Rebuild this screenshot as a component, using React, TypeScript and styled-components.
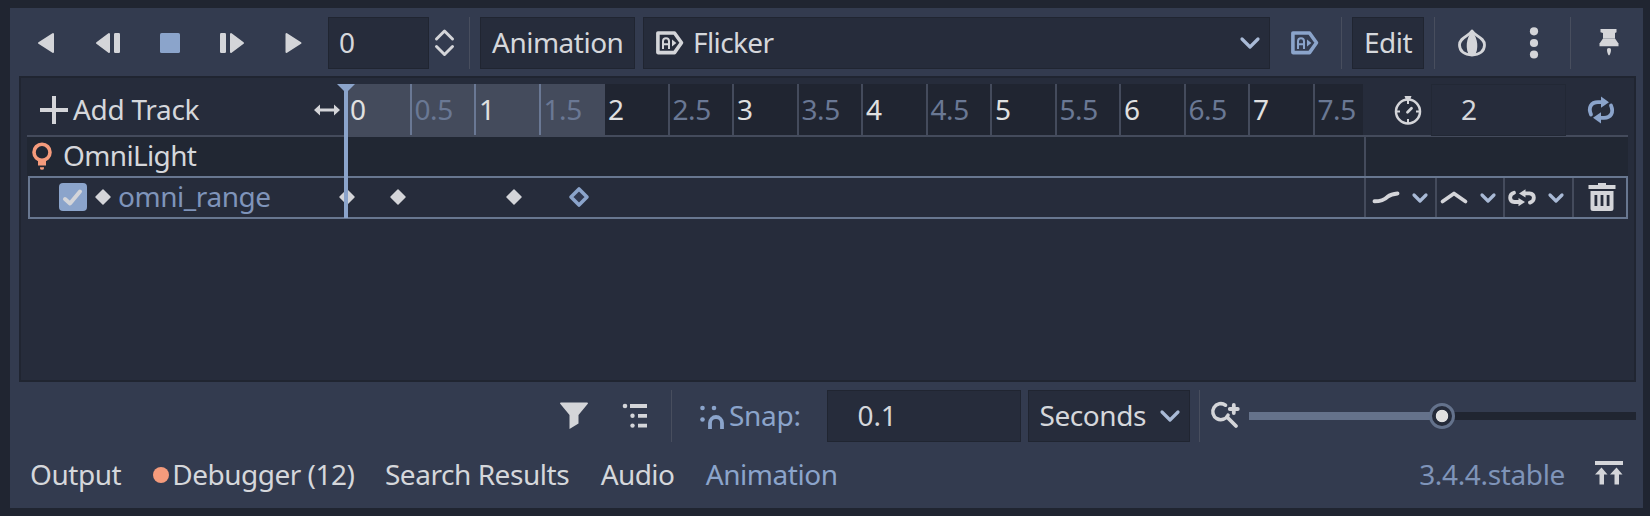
import React from "react";
import styled, { createGlobalStyle } from "styled-components";

const c = {
  base: "#202531",
  panel: "#333b4f",
  field: "#262c3b",
  line: "#444b5c",
  text: "#d5d7db",
  light: "#e0e0e0",
  icon: "#d4d5d9",
  accent: "#8ba4cb",
  dim: "#6a7894",
  select: "#687790",
  warn: "#f59b7c",
};

const GlobalStyle = createGlobalStyle`
  * { box-sizing: border-box; }
  body {
    margin: 0;
    background: ${c.base};
    color: ${c.text};
    font: 28px/38px "Noto Sans", sans-serif;
    white-space: nowrap;
    overflow: hidden;
  }
  svg { display: block; flex: none; overflow: visible; }
`;

const Page = styled.div`
  height: 516px;
  width: 1650px;
  padding: 8px 7px 8px 10px;
`;

const Dock = styled.main`
  height: 500px;
  background: ${c.panel};
  display: flex;
  flex-direction: column;
  padding: 9px 7px 0 9px;
`;

const Toolbar = styled.div`
  display: flex;
  align-items: center;
  height: 52px;
`;

const Transport = styled.div`
  display: flex;
  gap: 34px;
  padding: 0 20px 0 13px;
`;

const Slot = styled.div<{ $ml?: number; $mt?: number }>`
  margin-left: ${(p) => p.$ml ?? 0}px;
  margin-top: ${(p) => p.$mt ?? 0}px;
  flex: none;
`;

const Box = styled.div<{ $w: number; $pl: number; $ml?: number }>`
  width: ${(p) => p.$w}px;
  padding-left: ${(p) => p.$pl}px;
  margin-left: ${(p) => p.$ml ?? 0}px;
  height: 52px;
  flex: none;
  display: flex;
  align-items: center;
  background: ${c.field};
  border: 1px solid ${c.base};
`;

const Sep = styled.div<{ $ml: number }>`
  width: 1px;
  height: 52px;
  flex: none;
  margin-left: ${(p) => p.$ml}px;
  background: #484e5e;
`;

const Label = styled.span<{ $ls?: number; $ml?: number; $color?: string; $up?: number }>`
  letter-spacing: ${(p) => p.$ls ?? -0.45}px;
  margin-left: ${(p) => p.$ml ?? 0}px;
  margin-bottom: ${(p) => (p.$up ?? 1) * 2}px;
  color: ${(p) => p.$color ?? "inherit"};
`;

const Editor = styled.section`
  height: 306px;
  margin-top: 7px;
  background: ${c.field};
  border: 2px solid ${c.base};
  padding: 6px;
`;

const Tracks = styled.div`
  position: relative;
  width: 1601px;
`;

const Header = styled.div`
  display: flex;
  height: 53px;
  border-bottom: 2px solid ${c.line};
`;

const AddTrack = styled.div`
  width: 318px;
  flex: none;
  display: flex;
  align-items: center;
  padding-left: 13px;
`;

const Ruler = styled.div`
  width: 1018px;
  flex: none;
  display: flex;
  background: ${c.base};
  overflow: hidden;
`;

const Tick = styled.div<{ $major: boolean; $inside: boolean; $color: string }>`
  width: 64.5px;
  flex: none;
  display: flex;
  align-items: center;
  padding: 0 0 1px 3px;
  letter-spacing: -0.4px;
  border-left: 2px solid ${(p) => p.$color};
  background: ${(p) => (p.$inside ? c.line : "transparent")};
  color: ${(p) => (p.$major ? c.light : c.dim)};
`;

const LengthTools = styled.div`
  flex: 1;
  display: flex;
  align-items: center;
  padding-left: 31px;
`;

const LengthField = styled.div`
  width: 135px;
  height: 52px;
  margin: 1px 21px 0 9px;
  padding: 5px 0 0 29px;
  border: 1px solid #222835;
  background: ${c.field};
`;

const NodeRow = styled.div`
  height: 39px;
  display: flex;
  align-items: center;
  padding-left: 1px;
  background: #212733;
`;

const NodeEnd = styled.div`
  width: 264px;
  height: 39px;
  margin-left: auto;
  border-left: 2px solid ${c.line};
`;

const PropertyRow = styled.div`
  height: 43px;
  margin-left: 1px;
  display: flex;
  border: 2px solid ${c.select};
`;

const PropertyName = styled.div`
  width: 316px;
  display: flex;
  align-items: center;
  padding-left: 29px;
`;

const Check = styled.div`
  width: 28px;
  height: 28px;
  margin: 0 8px 1px 0;
  border-radius: 4px;
  background: ${c.accent};
`;

const KeyLane = styled.div`
  position: relative;
  flex: 1;
`;

const Key = styled.div<{ $x: number }>`
  position: absolute;
  left: ${(p) => p.$x - 14}px;
  top: 4.7px;
`;

const Cell = styled.div<{ $w: number; $pl: number; $gap?: number }>`
  width: ${(p) => p.$w}px;
  flex: none;
  display: flex;
  align-items: center;
  gap: ${(p) => p.$gap ?? 0}px;
  padding-left: ${(p) => p.$pl}px;
  border-left: 2px solid ${c.line};
`;

const Playhead = styled.div`
  position: absolute;
  left: 317px;
  top: 0;
  width: 4px;
  height: 134px;
  background: ${c.accent};
  &::before {
    content: "";
    position: absolute;
    left: -7px;
    top: 0;
    border: 9px solid transparent;
    border-top-color: ${c.accent};
    border-bottom: 0;
  }
`;

const Options = styled.div`
  display: flex;
  align-items: center;
  height: 52px;
  margin-top: 8px;
  padding-left: 541px;
`;

const Slider = styled.div`
  position: relative;
  flex: 1;
  height: 8px;
  margin-left: 9px;
  background: linear-gradient(90deg, #65728b 187px, ${c.base} 187px);
`;

const Thumb = styled.div`
  position: absolute;
  left: 180px;
  top: -9px;
  width: 26px;
  height: 26px;
  border-radius: 50%;
  border: 3px solid #64728c;
  background: radial-gradient(circle, ${c.light} 5.8px, #252b3a 6.6px);
`;

const Tabs = styled.div`
  display: flex;
  align-items: center;
  height: 64px;
  padding-left: 11px;
`;

const Dot = styled.i`
  width: 16px;
  height: 16px;
  margin: 1px 3px 0 32px;
  border-radius: 50%;
  background: ${c.warn};
`;

const Version = styled.span`
  margin-left: auto;
  margin-right: 30px;
  letter-spacing: -0.35px;
  color: #7f94b9;
`;

const EndSlot = styled.div`
  margin-right: 13px;
`;

type IconProps = { children: React.ReactNode; color?: string };
const Icon = ({ children, color = c.icon }: IconProps) => (
  <svg width="28" height="28" viewBox="0 0 28 28" fill={color} stroke={color} strokeWidth="0">
    {children}
  </svg>
);

const Line = ({ d, w = 3.4 }: { d: string; w?: number }) => (
  <path d={d} fill="none" strokeWidth={w} strokeLinecap="round" strokeLinejoin="round" />
);

const PlayShape = ({ x }: { x: number }) => (
  <path d={`M${x + 1} 5v18l14-9z`} strokeWidth="2" strokeLinejoin="round" />
);

const Play = () => <Icon><PlayShape x={5.5} /></Icon>;
const PlayBack = () => <Icon><g transform="matrix(-1 0 0 1 28 0)"><PlayShape x={6} /></g></Icon>;
const StepShape = () => (
  <>
    <rect x="2" y="4" width="6" height="20" rx="1.2" />
    <path d="M13 5v18l12-9z" strokeWidth="2" strokeLinejoin="round" />
  </>
);
const Step = () => <Icon><StepShape /></Icon>;
const StepBack = () => <Icon><g transform="matrix(-1 0 0 1 28 0)"><StepShape /></g></Icon>;
const Stop = () => <Icon color={c.accent}><rect x="4" y="4" width="20" height="20" rx="1.6" /></Icon>;

const UpDown = () => (
  <Icon>
    <Line w={3} d="M6.5 10 14.5 2l8 8M6.5 17.5l8 8 8-8" />
  </Icon>
);

const AutoPlay = ({ color }: { color?: string }) => (
  <Icon color={color}>
    <path d="M1.9 4h16.6l7 9.8-7 9.8H1.9z" fill="none" strokeWidth="3.6" strokeLinejoin="round" />
    <path d="M7 20v-7.8a3 3 0 0 1 6 0V20M7 15.3h6" fill="none" strokeWidth="2" />
    <path d="m16 10.5 4.4 3.5-4.4 3.5z" />
  </Icon>
);

const Chevron = ({ w = 3.2, s = 8 }: { w?: number; s?: number }) => (
  <Icon color="#a9bad6">
    <Line w={w} d={`M${14 - s} ${14 - s / 2}l${s} ${s} ${s}-${s}`} />
  </Icon>
);

const Onion = () => (
  <Icon>
    <path d="M14 2C11 7 1.5 8.5 1.5 16c0 6 5 10 12.5 10s12.5-4 12.5-10C26.5 8.5 17 7 14 2z" fill="none" strokeWidth="2.8" strokeLinejoin="round" />
    <path d="M14 2C8 9 7 20 11.5 27h5C21 20 20 9 14 2z" />
  </Icon>
);

const More = () => (
  <Icon>
    <circle cx="14" cy="2.3" r="4.1" />
    <circle cx="14" cy="14" r="4.1" />
    <circle cx="14" cy="25.5" r="4.1" />
  </Icon>
);

const Pin = () => (
  <Icon>
    <path d="M5.5 0h16v3.2l-1.500.8v5.500h-12V4L5.500 3.200z" />
    <path d="M8 9.500h12l3.500 5v2.700h-19v-2.700z" />
    <path d="M14 19c1.500 0 2 .8 2 2 0 2-1 5-2 5.500-1-.5-2-3.500-2-5.500 0-1.200.5-2 2-2z" />
  </Icon>
);

const Plus = () => <Icon><path d="M12 0h4v12h12v4H16v12h-4V16H0v-4h12z" /></Icon>;

const Stretch = () => (
  <Icon>
    <path d="M1 14l6-5.5v4h14v-4l6 5.5-6 5.5v-4H7v4z" />
  </Icon>
);

const Timer = () => (
  <Icon>
    <circle cx="14" cy="15.5" r="12" fill="none" strokeWidth="2.5" />
    <path d="M10.5 0h7l-1.500 4h-4zM13 4h2v4h-2zM13 23h2v4h-2zM2 14.500h4v2H2zM22 14.500h4v2h-4z" />
    <Line w={2.8} d="M13.5 16.2l4-4" />
  </Icon>
);

const LoopHalf = () => (
  <>
    <path d="M4 18.5C1 11.5 4 6.2 11 6.2h4" fill="none" strokeWidth="3.8" strokeLinecap="round" />
    <path d="M14 .6l8 5.6-8 5.6z" />
  </>
);

const Loop = () => (
  <Icon color={c.accent}>
    <LoopHalf />
    <g transform="rotate(180 14 14)"><LoopHalf /></g>
  </Icon>
);

const Bulb = () => (
  <Icon color={c.warn}>
    <circle cx="14" cy="9.3" r="8" fill="none" strokeWidth="3.6" />
    <path d="M10 16.5h8v6h-8zM12 24.3h4v1a2 1.5 0 0 1-4 0z" />
  </Icon>
);

const Diamond = () => <Icon><path d="M14 7l7 7-7 7-7-7z" strokeWidth="1.5" strokeLinejoin="round" /></Icon>;
const DiamondOpen = () => (
  <Icon>
    <path d="M14 6l8 8-8 8-8-8z" fill="#303950" stroke={c.accent} strokeWidth="3.6" strokeLinejoin="round" />
  </Icon>
);

const Curve = () => <Icon><Line w={3.9} d="M2.5 17.3c7 0 10.5-2 13-4.5 2.5-2 5.5-3 10-3.3" /></Icon>;
const Linear = () => <Icon><Line w={3.7} d="M2.5 17.5 14 9.5l11.5 8" /></Icon>;
const WrapHalf = () => (
  <>
    <path d="M6 8.8C.8 10.5.8 17.5 6.5 18h4.5" fill="none" strokeWidth="3.8" strokeLinecap="round" />
    <path d="M10.5 14l6.5 4-6.5 4.2z" />
  </>
);
const Wrap = () => (
  <Icon>
    <WrapHalf />
    <g transform="rotate(180 14 13.7)"><WrapHalf /></g>
  </Icon>
);

const Trash = () => (
  <Icon>
    <path d="M10 0h8v2h9.5v4H.5V2H10zM2.5 8h23v17.5a2.5 2.5 0 0 1-2.5 2.5H5a2.5 2.5 0 0 1-2.5-2.5z" />
    <path d="M6.5 12h2.8v11H6.5zM12.6 12h2.8v11h-2.8zM18.7 12h2.8v11h-2.8z" fill={c.field} />
  </Icon>
);

const Funnel = () => (
  <Icon>
    <path d="M0 1.5Q0 .5 1 .5h26q1 0 1 1L18.500 13v8.500L9.500 27V13z" />
  </Icon>
);

const ListTree = () => (
  <Icon>
    <circle cx="4" cy="4" r="2.3" />
    <circle cx="11.5" cy="13.8" r="2.2" />
    <circle cx="11.5" cy="23.6" r="2.2" />
    <path d="M9 2h17v4H9zM17 12h9v3.8h-9zM17 21.8h9v3.8h-9z" />
  </Icon>
);

const Magnet = () => (
  <Icon color={c.accent}>
    <circle cx="3.5" cy="6" r="2.3" />
    <circle cx="15" cy="6" r="2.3" />
    <circle cx="3.5" cy="17.5" r="2.3" />
    <path d="M11 27v-6a6 6 0 0 1 12 0v6" fill="none" strokeWidth="3.8" />
  </Icon>
);

const ZoomIn = () => (
  <Icon>
    <path d="M13.5 3.2a8 8 0 1 0 2.5 10" fill="none" strokeWidth="3.6" strokeLinecap="round" />
    <Line w={3.8} d="M15.5 15.500l8.500 8.500M21.800 3v8M17.800 7h8" />
  </Icon>
);

const Expand = () => (
  <Icon>
    <path d="M0 1h28v4H0zM6.500 7.500l6 7H9v10H4.500v-10H0zM21.500 7.500l6 7H24v10h-4.500v-10H15z" />
  </Icon>
);

const ticks = Array.from({ length: 16 }, (_, i) => i / 2);

const tickColor = (t: number) => (t > 0 && t < 2 ? c.dim : c.line);

export default function App() {
  return (
    <>
      <GlobalStyle />
      <Page>
        <Dock>
          <Toolbar>
            <Transport>
              <PlayBack />
              <StepBack />
              <Stop />
              <Step />
              <Play />
            </Transport>
            <Box $w={101} $pl={10}><Label>0</Label></Box>
            <Slot $ml={1}><UpDown /></Slot>
            <Sep $ml={11} />
            <Box $w={155} $pl={11} $ml={10}><Label $ls={-0.5}>Animation</Label></Box>
            <Box $w={627} $pl={12} $ml={8}>
              <AutoPlay />
              <Label $ml={9} $ls={-0.6}>Flicker</Label>
              <Slot $ml={462.5}><Chevron /></Slot>
            </Box>
            <Slot $ml={21}><AutoPlay color={c.accent} /></Slot>
            <Sep $ml={22} />
            <Box $w={72} $pl={11} $ml={10}><Label $ls={-0.5}>Edit</Label></Box>
            <Sep $ml={10} />
            <Slot $ml={23}><Onion /></Slot>
            <Slot $ml={34}><More /></Slot>
            <Sep $ml={22} />
            <Slot $ml={23.5}><Pin /></Slot>
          </Toolbar>

          <Editor>
            <Tracks>
              <Header>
                <AddTrack>
                  <Plus />
                  <Label $ml={5} $ls={-0.3} $up={0.5}>Add Track</Label>
                  <Slot $ml={114}><Stretch /></Slot>
                </AddTrack>
                <Ruler>
                  {ticks.map((t) => (
                    <Tick key={t} $major={t % 1 === 0} $inside={t < 2} $color={tickColor(t)}>
                      {t}
                    </Tick>
                  ))}
                </Ruler>
                <LengthTools>
                  <Timer />
                  <LengthField>2</LengthField>
                  <Loop />
                </LengthTools>
              </Header>
              <NodeRow>
                <Bulb />
                <Label $ml={7} $ls={-0.65} $up={2}>OmniLight</Label>
                <NodeEnd />
              </NodeRow>
              <PropertyRow>
                <PropertyName>
                  <Check>
                    <Icon><Line w={4} d="M6 16l5 4.5L21 8.5" /></Icon>
                  </Check>
                  <Slot $ml={-6} $mt={-1}><Diamond /></Slot>
                  <Label $ml={1} $ls={-0.45} $up={1.5} $color="#7f94ba">omni_range</Label>
                </PropertyName>
                <KeyLane>
                  <Key $x={1}><Diamond /></Key>
                  <Key $x={52}><Diamond /></Key>
                  <Key $x={168}><Diamond /></Key>
                  <Key $x={233}><DiamondOpen /></Key>
                </KeyLane>
                <Cell $w={71} $pl={6} $gap={6}><Curve /><Chevron s={6} /></Cell>
                <Cell $w={68} $pl={3} $gap={6}><Linear /><Chevron s={6} /></Cell>
                <Cell $w={69} $pl={3} $gap={6}><Wrap /><Chevron s={6} /></Cell>
                <Cell $w={54} $pl={13.5}><Slot $mt={-1}><Trash /></Slot></Cell>
              </PropertyRow>
              <Playhead />
            </Tracks>
          </Editor>

          <Options>
            <Funnel />
            <Slot $ml={33}><ListTree /></Slot>
            <Sep $ml={22} />
            <Slot $ml={27}><Magnet /></Slot>
            <Label $ml={2} $ls={-0.3} $color={c.accent}>Snap:</Label>
            <Box $w={194} $pl={30} $ml={26}><Label $ls={-0.2}>0.1</Label></Box>
            <Box $w={162} $pl={11} $ml={7}>
              <Label>Seconds</Label>
              <Slot $ml={10}><Chevron /></Slot>
            </Box>
            <Sep $ml={9} />
            <Slot $ml={12}><ZoomIn /></Slot>
            <Slider><Thumb /></Slider>
          </Options>

          <Tabs>
            <Label $up={0}>Output</Label>
            <Dot />
            <Label $up={0} $ls={-0.5}>Debugger (12)</Label>
            <Label $up={0} $ml={30.5}>Search Results</Label>
            <Label $up={0} $ml={31.5} $ls={-0.6}>Audio</Label>
            <Label $up={0} $ml={31.5} $color={c.accent}>Animation</Label>
            <Version>3.4.4.stable</Version>
            <EndSlot><Expand /></EndSlot>
          </Tabs>
        </Dock>
      </Page>
    </>
  );
}
